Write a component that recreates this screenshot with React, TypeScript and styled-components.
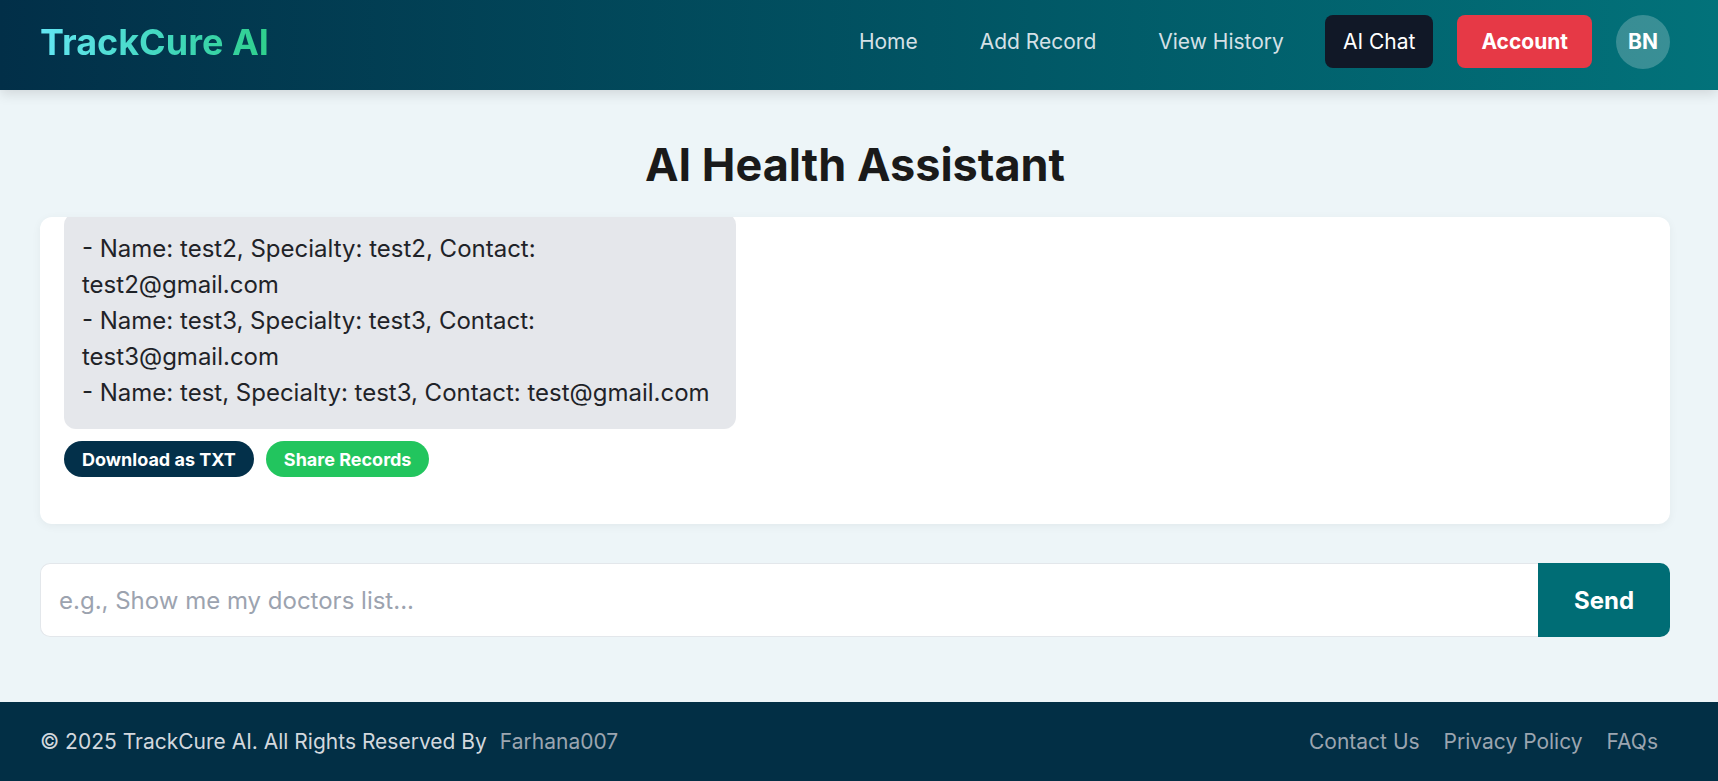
import React from "react"
import styled, { createGlobalStyle } from "styled-components"

const GlobalStyle = createGlobalStyle`
  * {
    box-sizing: border-box;
  }

  html, body {
    margin: 0;
    padding: 0;
    background: #edf5f8;
    font-family: Inter, "Noto Sans", "Liberation Sans", sans-serif;
  }
`

const Page = styled.div`
  min-height: 100vh;
  display: flex;
  flex-direction: column;
`

const HeaderBar = styled.header`
  height: 90px;
  padding: 0 48px 7px 40px;
  display: flex;
  align-items: center;
  justify-content: space-between;
  background: linear-gradient(90deg, #022f48 0%, #015866 60%, #02727a 100%);
  box-shadow: 0 4px 12px rgba(0, 0, 0, 0.12);
  position: relative;
  z-index: 1;
`

const Logo = styled.div`
  font-size: 36px;
  font-weight: 700;
  background: linear-gradient(90deg, #63e6f3 0%, #3fd6b8 60%, #2fcf8c 100%);
  -webkit-background-clip: text;
  background-clip: text;
  color: transparent;
`

const Nav = styled.nav`
  display: flex;
  align-items: center;
`

const NavLink = styled.a<{ $active?: boolean }>`
  font-size: 21px;
  color: ${p => (p.$active ? "#ffffff" : "#d5e0e6")};
  background: ${p => (p.$active ? "#111827" : "transparent")};
  padding: 0 ${p => (p.$active ? 18 : 21)}px;
  height: 53px;
  line-height: 53px;
  border-radius: 8px;
  margin-right: 20px;
  text-decoration: none;
  cursor: pointer;
`

const AccountButton = styled.button`
  font-family: inherit;
  font-size: 21px;
  font-weight: 700;
  color: #ffffff;
  background: #e63946;
  border: none;
  border-radius: 8px;
  height: 53px;
  padding: 0 24px;
  margin-left: 4px;
  cursor: pointer;
`

const Avatar = styled.div`
  width: 54px;
  height: 54px;
  border-radius: 50%;
  margin-left: 24px;
  background: rgba(255, 255, 255, 0.22);
  color: #ffffff;
  font-size: 21px;
  font-weight: 700;
  display: flex;
  align-items: center;
  justify-content: center;
`

const Main = styled.main`
  flex: 1;
  padding: 48px 48px 0 40px;
  display: flex;
  flex-direction: column;
`

const Title = styled.h1`
  margin: 0 0 25px;
  font-size: 45px;
  line-height: 54px;
  font-weight: 700;
  color: #1a1a1a;
  text-align: center;
`

const ChatCard = styled.section`
  height: 307px;
  background: #ffffff;
  border-radius: 12px;
  box-shadow: 0 2px 10px rgba(0, 0, 0, 0.05);
  padding: 24px 24px 47px;
  overflow: hidden;
  display: flex;
  flex-direction: column;
  justify-content: flex-end;
`

const MessageRow = styled.div<{ $mine?: boolean }>`
  display: flex;
  flex-direction: column;
  align-items: ${p => (p.$mine ? "flex-end" : "flex-start")};
  flex-shrink: 0;
`

const Bubble = styled.div<{ $mine?: boolean }>`
  max-width: 672px;
  padding: 18px 18px;
  border-radius: 12px;
  background: ${p => (p.$mine ? "#006d75" : "#e5e7eb")};
  color: ${p => (p.$mine ? "#ffffff" : "#1f2328")};
  font-size: 24px;
  line-height: 36px;
  white-space: pre-wrap;
`

const ActionRow = styled.div`
  display: flex;
  gap: 12px;
  margin-top: 12px;
`

const PillButton = styled.button<{ $tone: "navy" | "green" }>`
  font-family: inherit;
  font-size: 18px;
  font-weight: 700;
  color: #ffffff;
  background: ${p => (p.$tone === "navy" ? "#03304a" : "#22c55e")};
  border: none;
  border-radius: 999px;
  height: 36px;
  padding: 0 18px;
  cursor: pointer;
`

const InputRow = styled.form`
  display: flex;
  margin-top: 39px;
  height: 74px;
`

const TextInput = styled.input`
  flex: 1;
  font-family: inherit;
  font-size: 24px;
  color: #1f2328;
  padding: 0 18px;
  background: #ffffff;
  border: 1px solid #e3e7eb;
  border-right: none;
  border-radius: 10px 0 0 10px;
  outline: none;

  &::placeholder {
    color: #9ca3af;
  }
`

const SendButton = styled.button`
  width: 132px;
  font-family: inherit;
  font-size: 24px;
  font-weight: 700;
  color: #ffffff;
  background: #006d75;
  border: none;
  border-radius: 0 10px 10px 0;
  cursor: pointer;
`

const FooterBar = styled.footer`
  height: 79px;
  margin-top: 65px;
  padding: 0 60px 0 40px;
  background: #022f45;
  display: flex;
  align-items: center;
  justify-content: space-between;
  font-size: 21px;
`

const Copyright = styled.div`
  color: #d3d8de;
`

const Author = styled.span`
  color: #9ba5b0;
  margin-left: 13px;
`

const FooterLinks = styled.div`
  display: flex;
  gap: 24px;
`

const FooterLink = styled.a`
  color: #9ba5b0;
  text-decoration: none;
  cursor: pointer;
`

const assistantReply = `- Name: test2, Specialty: test2, Contact: test2@gmail.com
- Name: test3, Specialty: test3, Contact: test3@gmail.com
- Name: test, Specialty: test3, Contact: test@gmail.com`

export default function App() {
  return (
    <Page>
      <GlobalStyle />
      <HeaderBar>
        <Logo>TrackCure AI</Logo>
        <Nav>
          <NavLink>Home</NavLink>
          <NavLink>Add Record</NavLink>
          <NavLink>View History</NavLink>
          <NavLink $active>AI Chat</NavLink>
          <AccountButton>Account</AccountButton>
          <Avatar>BN</Avatar>
        </Nav>
      </HeaderBar>

      <Main>
        <Title>AI Health Assistant</Title>
        <ChatCard>
          <MessageRow>
            <Bubble>{assistantReply}</Bubble>
            <ActionRow>
              <PillButton $tone="navy">Download as TXT</PillButton>
              <PillButton $tone="green">Share Records</PillButton>
            </ActionRow>
          </MessageRow>
        </ChatCard>

        <InputRow onSubmit={e => e.preventDefault()}>
          <TextInput placeholder="e.g., Show me my doctors list..." />
          <SendButton type="submit">Send</SendButton>
        </InputRow>
      </Main>

      <FooterBar>
        <Copyright>
          © 2025 TrackCure AI. All Rights Reserved By
          <Author>Farhana007</Author>
        </Copyright>
        <FooterLinks>
          <FooterLink>Contact Us</FooterLink>
          <FooterLink>Privacy Policy</FooterLink>
          <FooterLink>FAQs</FooterLink>
        </FooterLinks>
      </FooterBar>
    </Page>
  )
}
